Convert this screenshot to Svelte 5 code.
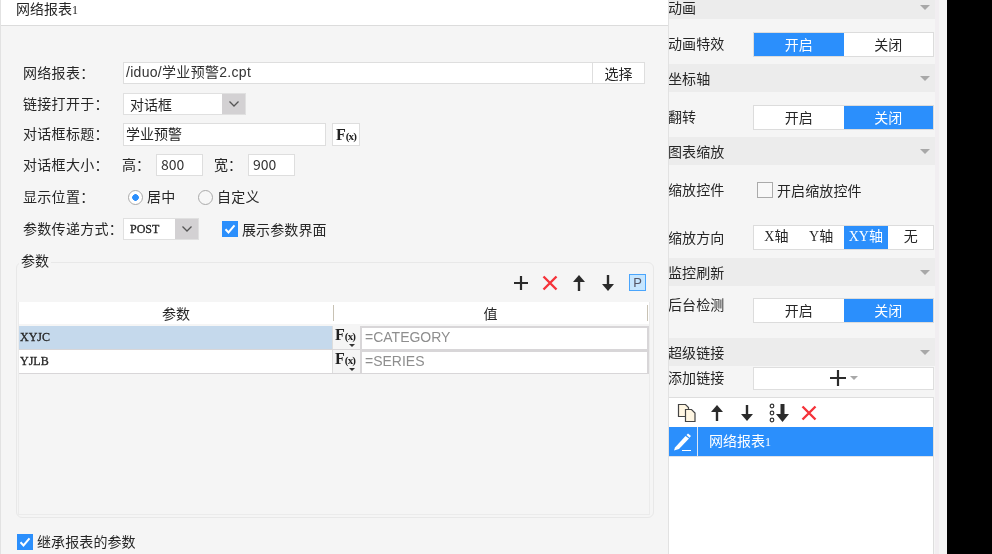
<script>
  // Sections of the property panel on the right
  const seg1 = ['开启', '关闭'];
  const zoomDirs = ['X轴', 'Y轴', 'XY轴', '无'];

  const params = [
    { name: 'XYJC', value: '=CATEGORY', selected: true },
    { name: 'YJLB', value: '=SERIES', selected: false }
  ];
</script>

{#snippet seg(items, active, cls)}
  <div class="seg {cls}">
    {#each items as item, i}
      <span class="seg-item" class:on={i === active}>{item}</span>
    {/each}
  </div>
{/snippet}

{#snippet head(title)}
  <div class="sec-head">
    <span>{title}</span>
    <i class="tri"></i>
  </div>
{/snippet}

{#snippet fx()}
  <span class="fx"><b>F</b><small>(x)</small></span>
{/snippet}

{#snippet up()}
  <svg width="16" height="16" viewBox="0 0 16 16"><path d="M8 16V5" stroke="#2b2b2b" stroke-width="2.4" /><path d="M8 0l6 7H2z" fill="#2b2b2b" /></svg>
{/snippet}

{#snippet down()}
  <svg width="16" height="16" viewBox="0 0 16 16"><path d="M8 0v11" stroke="#2b2b2b" stroke-width="2.4" /><path d="M8 16l6-7H2z" fill="#2b2b2b" /></svg>
{/snippet}

{#snippet cross()}
  <svg width="16" height="16" viewBox="0 0 16 16"><path d="M1.5 1.5l13 13M14.5 1.5l-13 13" stroke="#f5333a" stroke-width="2.4" /></svg>
{/snippet}

<div class="page">
  <div class="left">
    <div class="title">网络报表<span class="num">1</span></div>
    <div class="form">
      <div class="row">
        <span class="label">网络报表：</span>
        <div class="input path">/iduo/学业预警2.cpt</div>
        <div class="btn">选择</div>
      </div>
      <div class="row">
        <span class="label">链接打开于：</span>
        <div class="combo wide">
          <span class="combo-text">对话框</span>
          <span class="arrow"><svg width="12" height="8" viewBox="0 0 12 8"><path d="M1.5 1.5L6 6l4.5-4.5" fill="none" stroke="#555" stroke-width="1.3" /></svg></span>
        </div>
      </div>
      <div class="row closer">
        <span class="label">对话框标题：</span>
        <div class="input dlg-title">学业预警</div>
        <div class="fx-btn">{@render fx()}</div>
      </div>
      <div class="row">
        <span class="label">对话框大小：</span>
        <span class="mini-label">高：</span>
        <div class="input num-input">800</div>
        <span class="mini-label second">宽：</span>
        <div class="input num-input">900</div>
      </div>
      <div class="row wider">
        <span class="label">显示位置：</span>
        <span class="radio first on"></span>
        <span class="radio-text">居中</span>
        <span class="radio"></span>
        <span class="radio-text">自定义</span>
      </div>
      <div class="row wider">
        <span class="label">参数传递方式：</span>
        <div class="combo narrow">
          <span class="combo-text latin">POST</span>
          <span class="arrow"><svg width="12" height="8" viewBox="0 0 12 8"><path d="M1.5 1.5L6 6l4.5-4.5" fill="none" stroke="#555" stroke-width="1.3" /></svg></span>
        </div>
        <span class="check on show-param"><svg width="16" height="16" viewBox="0 0 16 16"><path d="M3.5 8.2l3 3.2 6-7" fill="none" stroke="#fff" stroke-width="2" /></svg></span>
        <span class="check-text">展示参数界面</span>
      </div>
    </div>

    <div class="group">
      <span class="legend">参数</span>
      <div class="toolbar">
        <svg width="16" height="16" viewBox="0 0 16 16"><path d="M8 1v14M1 8h14" stroke="#2b2b2b" stroke-width="2.2" /></svg>
        {@render cross()}
        {@render up()}
        {@render down()}
        <span class="p-btn">P</span>
      </div>
      <div class="table">
        <div class="thead">
          <span class="th first-col">参数</span>
          <span class="th">值</span>
        </div>
        {#each params as p}
          <div class="tr">
            <span class="td-name" class:selected={p.selected}>{p.name}</span>
            <span class="td-fx">{@render fx()}<i class="mini-tri"></i></span>
            <span class="td-val"><span class="val-box">{p.value}</span></span>
          </div>
        {/each}
      </div>
    </div>

    <div class="inherit">
      <span class="check on"><svg width="16" height="16" viewBox="0 0 16 16"><path d="M3.5 8.2l3 3.2 6-7" fill="none" stroke="#fff" stroke-width="2" /></svg></span>
      <span class="check-text">继承报表的参数</span>
    </div>
  </div>

  <div class="right">
    <div class="panel">
      <div class="sec-head first-head"><span>动画</span><i class="tri"></i></div>
      <div class="sec-row r1">
        <span class="r-label">动画特效</span>
        {@render seg(seg1, 0, 'two')}
      </div>

      {@render head('坐标轴')}
      <div class="sec-row r1">
        <span class="r-label">翻转</span>
        {@render seg(seg1, 1, 'two')}
      </div>

      {@render head('图表缩放')}
      <div class="zoom-sec">
        <div class="zoom-check">
          <span class="r-label">缩放控件</span>
          <span class="check empty"></span>
          <span class="check-text">开启缩放控件</span>
        </div>
        <div class="zoom-dir">
          <span class="r-label">缩放方向</span>
          {@render seg(zoomDirs, 2, 'four')}
        </div>
      </div>

      {@render head('监控刷新')}
      <div class="sec-row r2">
        <span class="r-label lifted">后台检测</span>
        {@render seg(seg1, 1, 'two')}
      </div>

      {@render head('超级链接')}
      <div class="add-row">
        <span class="r-label">添加链接</span>
        <div class="add-btn">
          <svg width="18" height="18" viewBox="0 0 18 18"><path d="M9 1v16M1 9h16" stroke="#2b2b2b" stroke-width="2.2" /></svg>
          <i class="tri small"></i>
        </div>
      </div>

      <div class="list">
        <div class="list-tools">
          <svg width="20" height="20" viewBox="0 0 20 20">
            <path d="M1.5 1.5h7l3 3v9h-10z" fill="#fff6e2" stroke="#444" stroke-width="1.2" />
            <path d="M8.5 6.5h6l3.5 3.5v8.5h-9.5z" fill="#fff6e2" stroke="#444" stroke-width="1.2" />
          </svg>
          {@render up()}
          {@render down()}
          <svg width="21" height="20" viewBox="0 0 21 20">
            <circle cx="3" cy="3" r="1.8" fill="none" stroke="#333" stroke-width="1.2" />
            <circle cx="3" cy="10" r="1.8" fill="none" stroke="#333" stroke-width="1.2" />
            <circle cx="3" cy="17" r="1.8" fill="none" stroke="#333" stroke-width="1.2" />
            <path d="M13.5 1v11" stroke="#2b2b2b" stroke-width="4" />
            <path d="M13.5 19l6.5-8H7z" fill="#2b2b2b" />
          </svg>
          {@render cross()}
        </div>
        <div class="list-item">
          <span class="pencil">
            <svg width="20" height="20" viewBox="0 0 20 20">
              <path d="M2 15.5L12.5 4l3.5 2.5L6 17l-5 1.5z" fill="#fff" />
              <path d="M13.5 3l1.5-1.5 3 2.5-1.5 1.8z" fill="#fff" />
              <path d="M9 18.5h9" stroke="#fff" stroke-width="1" />
            </svg>
          </span>
          <span class="item-text">网络报表<span class="num">1</span></span>
        </div>
      </div>
    </div>
    <div class="strip"></div>
  </div>
  <div class="void"></div>
</div>

<style>
  :global(body) {
    margin: 0;
    background: #000;
  }
  .page {
    display: flex;
    width: 992px;
    height: 554px;
    overflow: hidden;
    color: #262626;
    font-family: "Noto Sans CJK SC", "Liberation Sans", sans-serif;
    font-size: 14px;
    filter: blur(0.35px);
  }

  /* Left dialog */
  .left {
    width: 669px;
    flex: none;
    box-sizing: border-box;
    height: 554px;
    background: #f5f5f5;
    border-left: 1px solid #e2e2e2;
    border-right: 1px solid #e2e2e2;
  }
  .title {
    height: 25px;
    line-height: 16px;
    padding-left: 15px;
    background: #fff;
    border-bottom: 1px solid #dcdcdc;
  }
  .num {
    font-family: "Liberation Serif", serif;
    font-size: 12px;
  }
  .form {
    display: flex;
    flex-direction: column;
    gap: 9px;
    padding: 36px 0 0 22px;
  }
  .row {
    display: flex;
    align-items: center;
    height: 22px;
    white-space: nowrap;
  }
  .closer {
    margin-top: -1px;
  }
  .wider {
    margin-top: 1px;
  }
  .label {
    width: 100px;
    flex: none;
    margin-top: -2px;
    letter-spacing: 0.3px;
  }
  .input {
    box-sizing: border-box;
    height: 22px;
    line-height: 18px;
    padding-left: 2px;
    background: #fff;
    border: 1px solid #dedede;
  }
  .path {
    width: 470px;
    color: #333;
    letter-spacing: 0.3px;
    font-family: "Liberation Sans", "Noto Sans CJK SC", sans-serif;
  }
  .btn {
    box-sizing: border-box;
    width: 52px;
    height: 22px;
    line-height: 20px;
    text-align: center;
    background: #fff;
    border: 1px solid #dedede;
    border-left: 0;
  }
  .combo {
    box-sizing: border-box;
    display: flex;
    height: 22px;
    background: #fff;
    border: 1px solid #e0e0e0;
  }
  .wide {
    width: 123px;
  }
  .narrow {
    width: 76px;
  }
  .combo-text {
    flex: 1;
    padding-left: 6px;
    line-height: 20px;
  }
  .latin {
    font-family: "Liberation Serif", serif;
    font-size: 12px;
    -webkit-text-stroke: 0.3px #262626;
  }
  .arrow {
    display: flex;
    align-items: center;
    justify-content: center;
    width: 23px;
    background: #d3d1d3;
  }
  .dlg-title {
    width: 203px;
    height: 23px;
  }
  .fx-btn {
    box-sizing: border-box;
    width: 28px;
    height: 23px;
    margin-left: 6px;
    text-align: center;
    line-height: 20px;
    background: #fff;
    border: 1px solid #dedede;
  }
  .fx {
    font-family: "Liberation Serif", serif;
    color: #222;
  }
  .fx b {
    font-size: 16px;
  }
  .fx small {
    font-size: 11px;
    font-weight: bold;
    letter-spacing: -0.8px;
  }
  .mini-label {
    width: 34px;
    margin-left: -1px;
    margin-top: -2px;
    flex: none;
  }
  .mini-label.second {
    margin-left: 11px;
  }
  .num-input {
    width: 47px;
    padding-left: 4px;
    color: #333;
  }
  .radio {
    box-sizing: border-box;
    width: 15px;
    height: 15px;
    flex: none;
    margin-left: 12px;
    border: 1px solid #aaa;
    border-radius: 50%;
    background: #f7f7f7;
  }
  .radio.first {
    margin-left: 5px;
  }
  .radio.on {
    background: radial-gradient(circle, #2b8ffc 0 3px, #fff 3.6px);
  }
  .radio-text {
    margin-left: 4px;
    margin-top: -2px;
    letter-spacing: 0.3px;
    width: 39px;
  }
  .check {
    box-sizing: border-box;
    display: block;
    width: 16px;
    height: 16px;
    flex: none;
  }
  .check.on {
    background: #2b8ffc;
  }
  .check.empty {
    background: #f8f8f8;
    border: 1px solid #aaa;
  }
  .check-text {
    margin-left: 4px;
    letter-spacing: 0.1px;
  }
  .show-param {
    margin-left: 23px;
  }

  /* Parameter group */
  .group {
    position: relative;
    box-sizing: border-box;
    display: flex;
    flex-direction: column;
    width: 638px;
    height: 256px;
    margin: 22px 0 0 15px;
    padding: 0 3px 2px 1px;
    border: 1px solid #e8e8e8;
    border-radius: 6px;
  }
  .legend {
    position: absolute;
    top: -13px;
    left: 2px;
    padding: 0 2px;
    background: #f5f5f5;
    line-height: 20px;
  }
  .toolbar {
    display: flex;
    align-items: center;
    justify-content: flex-end;
    gap: 13px;
    height: 39px;
    padding-right: 4px;
    flex: none;
  }
  .p-btn {
    box-sizing: border-box;
    width: 17px;
    height: 17px;
    line-height: 15px;
    text-align: center;
    font-family: "Liberation Sans", sans-serif;
    font-size: 13px;
    color: #556;
    background: #c6e6ff;
    border: 1px solid #4aa5fc;
  }
  .table {
    flex: 1;
    border: 1px solid #ebebeb;
    border-top: 0;
  }
  .thead {
    display: flex;
    height: 22px;
    background: #fff;
    margin-bottom: 2px;
  }
  .th {
    flex: 1;
    text-align: center;
    line-height: 22px;
    position: relative;
  }
  .first-col {
    flex: none;
    width: 314px;
    border-right: 1px solid #c8c2b4;
    height: 16px;
    margin-top: 3px;
    line-height: 16px;
  }
  .th:last-child {
    margin-right: 1px;
    border-right: 1px solid #c8c2b4;
    height: 16px;
    margin-top: 3px;
    line-height: 16px;
  }
  .tr {
    display: flex;
    height: 24px;
    border-bottom: 1px solid #d8d6d8;
    box-sizing: border-box;
  }
  .td-name {
    width: 314px;
    flex: none;
    box-sizing: border-box;
    padding-left: 1px;
    line-height: 23px;
    font-family: "Liberation Serif", serif;
    font-size: 12px;
    -webkit-text-stroke: 0.3px #262626;
    background: #fff;
    border-right: 1px solid #ddd;
  }
  .td-name.selected {
    background: #c5d9ec;
  }
  .td-fx {
    position: relative;
    width: 27px;
    flex: none;
    box-sizing: border-box;
    padding-left: 2px;
    line-height: 16px;
    background: #f5f5f5;
  }
  .mini-tri {
    position: absolute;
    right: 5px;
    bottom: 2px;
    border: 3px solid transparent;
    border-top: 3px solid #333;
    border-bottom: 0;
  }
  .td-val {
    flex: 1;
    box-sizing: border-box;
    background: #fff;
    border: 2px solid #d8d6d8;
    border-bottom: 0;
  }
  .val-box {
    display: block;
    padding-left: 3px;
    line-height: 19px;
    color: #8e8e8e;
    font-family: "Liberation Sans", sans-serif;
    font-size: 14px;
  }
  .inherit {
    display: flex;
    align-items: center;
    height: 16px;
    margin: 16px 0 0 16px;
  }
  .inherit .check-text {
    margin-top: -3px;
  }

  /* Right property panel */
  .right {
    display: flex;
    width: 278px;
    flex: none;
    background: #f5f5f5;
  }
  .panel {
    width: 266px;
    overflow: hidden;
  }
  .strip {
    width: 4px;
    height: 554px;
    background: #f1eef1;
  }
  .void {
    flex: 1;
    background: #000;
  }
  .sec-head {
    display: flex;
    align-items: center;
    justify-content: space-between;
    height: 28px;
    padding-right: 5px;
    background: #ececec;
    letter-spacing: 0.1px;
  }
  .sec-head span {
    margin-left: -1px;
  }
  .first-head {
    height: 19px;
    padding-bottom: 5px;
    box-sizing: border-box;
  }
  .tri {
    display: block;
    border: 5px solid transparent;
    border-top: 5px solid #a8a8a8;
    border-bottom: 0;
  }
  .tri.small {
    border-width: 4px;
    border-bottom: 0;
    margin-left: 3px;
  }
  .sec-row {
    display: flex;
    align-items: center;
    justify-content: space-between;
  }
  .r1 {
    height: 45px;
    box-sizing: border-box;
    padding-top: 5px;
  }
  .r2 {
    height: 52px;
    padding-bottom: 3px;
    box-sizing: border-box;
    align-items: flex-start;
    padding-top: 12px;
  }
  .r-label {
    margin-left: -1px;
    margin-top: -2px;
    letter-spacing: 0.1px;
    flex: none;
  }
  .r-label.lifted {
    margin-top: -4px;
  }
  .seg {
    box-sizing: border-box;
    display: flex;
    width: 181px;
    height: 25px;
    margin-right: 1px;
    background: #fff;
    border: 1px solid #dcdcdc;
  }
  .seg-item {
    flex: 1;
    text-align: center;
    line-height: 22px;
  }
  .seg-item.on {
    color: #fff;
    background: #2b8ffc;
  }
  .four .seg-item {
    font-family: "Liberation Serif", "Noto Sans CJK SC", serif;
  }
  .zoom-sec {
    height: 93px;
  }
  .zoom-check {
    display: flex;
    align-items: center;
    height: 50px;
  }
  .zoom-check .r-label {
    width: 89px;
  }
  .zoom-dir {
    display: flex;
    align-items: center;
    justify-content: space-between;
    margin-top: 10px;
  }
  .add-row {
    display: flex;
    align-items: center;
    justify-content: space-between;
    height: 24px;
  }
  .add-btn {
    box-sizing: border-box;
    display: flex;
    align-items: center;
    justify-content: center;
    width: 181px;
    height: 23px;
    margin-right: 1px;
    background: #fff;
    border: 1px solid #dedede;
  }
  .list {
    box-sizing: border-box;
    height: 200px;
    margin-top: 7px;
    margin-right: 1px;
    background: #fff;
    border: 1px solid #dedede;
    border-left: 0;
  }
  .list-tools {
    display: flex;
    align-items: center;
    gap: 14px;
    height: 29px;
    padding-left: 8px;
  }
  .list-tools svg:nth-child(2) {
    margin-left: -2px;
  }
  .list-tools svg:nth-child(5) {
    margin-left: -3px;
  }
  .list-item {
    display: flex;
    height: 30px;
    background: #2b8ffc;
    color: #fff;
    border-bottom: 1px solid #dfe3ea;
    box-sizing: border-box;
  }
  .pencil {
    display: flex;
    align-items: center;
    justify-content: center;
    width: 28px;
    border-right: 1px solid #dfe8f5;
  }
  .item-text {
    margin-left: 11px;
    line-height: 26px;
  }
</style>
